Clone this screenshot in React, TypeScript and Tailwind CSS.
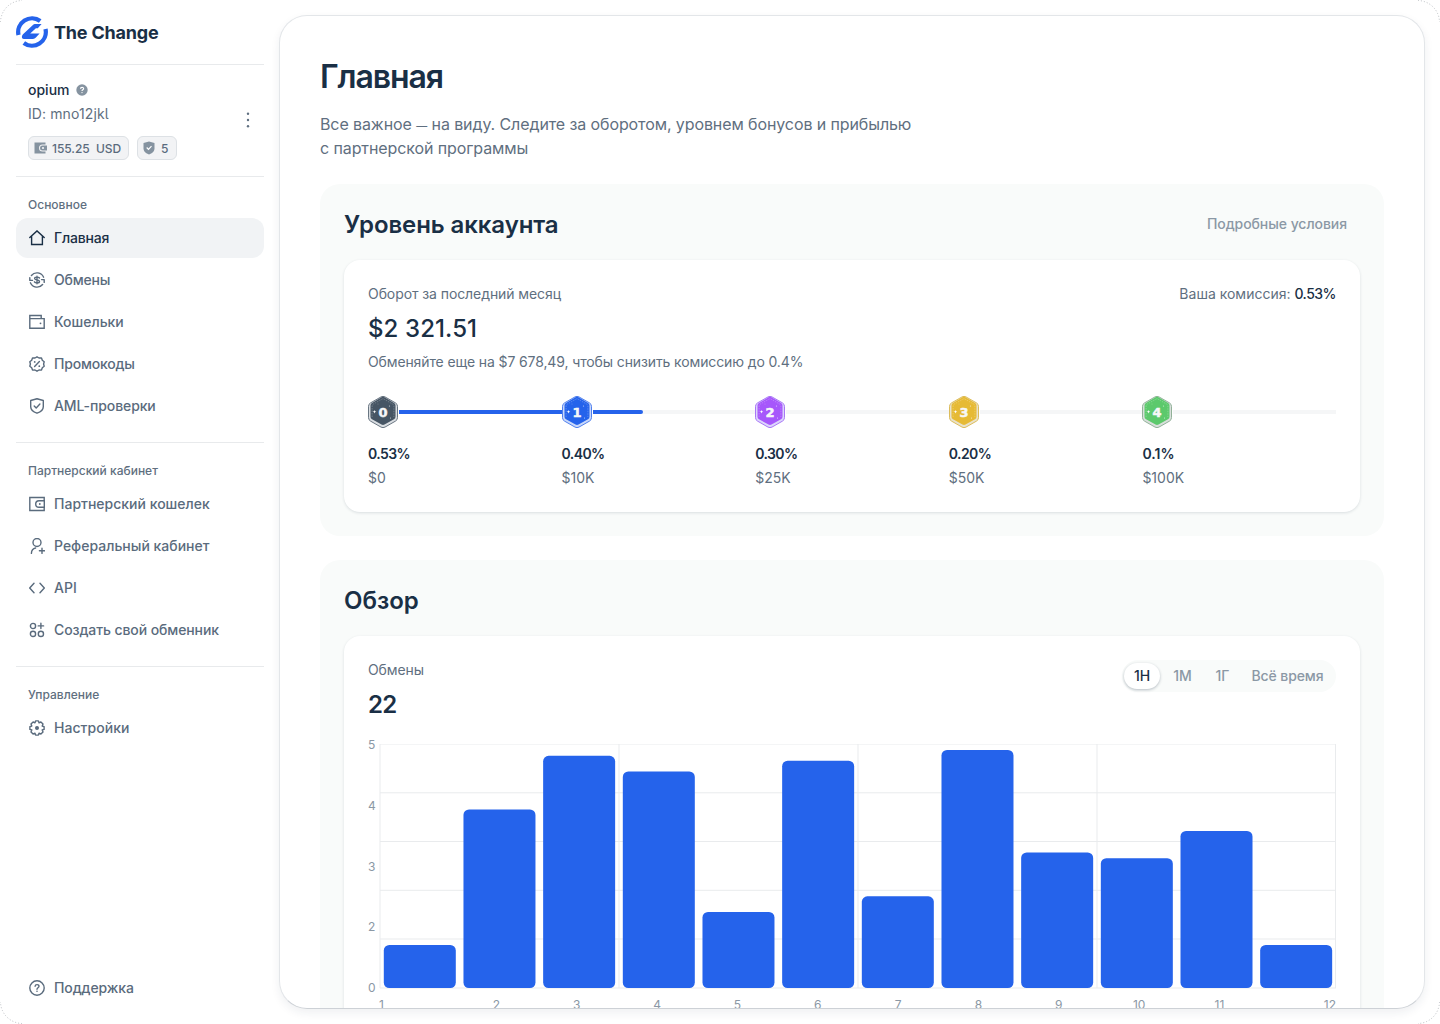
import type { ReactNode } from 'react';

type IconProps = { children: ReactNode; className?: string };

const Icon = ({ children, className = 'w-4 h-4' }: IconProps) => (
  <svg
    viewBox="0 0 16 16"
    className={`${className} shrink-0`}
    fill="none"
    stroke="currentColor"
    strokeWidth="1.4"
    strokeLinecap="round"
    strokeLinejoin="round"
  >
    {children}
  </svg>
);

const HomeIcon = () => (
  <Icon>
    <path d="M.8 7.6 8 .9l7.2 6.7M2.6 6.2v8.3h10.8V6.2" strokeLinejoin="miter" />
  </Icon>
);

const ExchangeIcon = () => (
  <Icon>
    <path d="M2.4 3.5A7.2 7.2 0 0 1 14.6 5.2M13.6 12.5A7.2 7.2 0 0 1 1.4 10.8" />
    <path d="M.8 5.600v2.800h2.700M15.200 10.400V7.600h-2.700" />
    <path d="M10.500 6C10 5.300 9.100 5.100 8 5.100c-1.400 0-2.400.5-2.400 1.500 0 2 4.900.8 4.900 2.800 0 1-1.200 1.500-2.500 1.500-1.200 0-2.200-.4-2.600-1.100M8 4.300v7.400" />
  </Icon>
);

const WalletIcon = () => (
  <Icon>
    <path d="M.8 4.600V1.500h11.400v3.100M.8 4.600h14.400v9.600H.8z" strokeLinejoin="miter" />
    <circle cx="11.500" cy="9.300" r=".9" fill="currentColor" stroke="none" />
  </Icon>
);

const PromoIcon = () => (
  <Icon>
    <path d="M8 .8 10 2l2.500-.1.8 2.300 1.900 1.500-.6 2.300.6 2.300-1.900 1.500-.8 2.300-2.500-.1-2 1.200-2-1.200-2.500.1-.8-2.300L.8 10.300 1.400 8 .8 5.700l1.900-1.500.8-2.300L6 2z" />
    <path d="M10.400 5.600 5.600 10.400" />
    <circle cx="5.700" cy="5.900" r=".9" fill="currentColor" stroke="none" />
    <circle cx="10.300" cy="10.200" r=".9" fill="currentColor" stroke="none" />
  </Icon>
);

const ShieldIcon = () => (
  <Icon>
    <path d="M8 .8 14.300 2.500v6.200c0 3.300-3 5.300-6.300 6.500-3.300-1.200-6.300-3.200-6.300-6.500V2.500z" />
    <path d="m5.200 7.900 2 2 3.700-3.800" />
  </Icon>
);

const PartnerWalletIcon = () => (
  <Icon>
    <path d="M15.200 4.300V1.500H.8v13h14.400v-2.800M15.300 4.700H10a3.300 3.300 0 0 0 0 6.600h5.300z" strokeLinejoin="miter" />
    <circle cx="10.800" cy="8" r=".9" fill="currentColor" stroke="none" />
  </Icon>
);

const ReferralIcon = () => (
  <Icon>
    <circle cx="8" cy="4.500" r="4" />
    <path d="M2.400 15.400c.1-3 1.700-5 4.200-5.400M13 10.200v5.200M10.400 12.800h5.200" />
  </Icon>
);

const CodeIcon = () => (
  <Icon>
    <path d="M5 3.200.7 8 5 12.800M11 3.200 15.300 8 11 12.800" />
  </Icon>
);

const AppsIcon = () => (
  <Icon>
    <circle cx="4" cy="4" r="2.600" />
    <circle cx="4" cy="11.900" r="2.600" />
    <circle cx="11.900" cy="11.900" r="2.600" />
    <path d="M11.900 1.200v5.400M9.200 3.900h5.400" />
  </Icon>
);

const SettingsIcon = () => (
  <Icon>
    <path d="M6.600.9h2.800l.6 1.900 1.900-.8L14 4.100l-.8 1.900 1.900.6v2.800l-1.900.6.8 1.900-2.100 2.100-1.900-.8-.6 1.900H6.600L6 13.200l-1.900.8L2 11.900l.8-1.900-1.900-.6V6.600L2.800 6 2 4.100 4.100 2l1.900.8z" />
    <circle cx="8" cy="8" r="1.300" fill="currentColor" />
  </Icon>
);

const HelpIcon = () => (
  <Icon>
    <circle cx="8" cy="8" r="7.200" />
    <path d="M6.100 6.300C6.200 5.200 6.900 4.600 8 4.600s2 .7 2 1.700c0 1.400-2 1.500-2 2.900" />
    <circle cx="8" cy="11.300" r=".8" fill="currentColor" stroke="none" />
  </Icon>
);

const LogoMark = () => (
  <svg viewBox="0 0 32 32" className="w-8 h-8 shrink-0" fill="none" stroke="#2563eb" strokeWidth="4.300">
    <path d="M2.500 19A13.800 13.800 0 0 1 24.200 5" />
    <path d="M29.500 13A13.800 13.800 0 0 1 7.800 27" />
    <path
      d="m7 18.200 9.400-8.800c1.100-1.100 2-1.500 3.400-1.500h5.800l-3.800 4.300h-1.900l-5.700 5.400h9.400l-3.700 4c-.9.900-1.700 1.300-2.900 1.300H7.800c-2.200 0-2.500-3-.8-4.700z"
      fill="#2563eb"
      stroke="none"
    />
  </svg>
);

const mainMenu = [
  { label: 'Главная', icon: <HomeIcon />, tracking: 'tracking-[-0.2px]' },
  { label: 'Обмены', icon: <ExchangeIcon />, tracking: 'tracking-[-0.2px]' },
  { label: 'Кошельки', icon: <WalletIcon />, tracking: 'tracking-normal' },
  { label: 'Промокоды', icon: <PromoIcon />, tracking: 'tracking-[-0.2px]' },
  { label: 'AML-проверки', icon: <ShieldIcon />, tracking: 'tracking-[-0.1px]' },
];

const partnerMenu = [
  { label: 'Партнерский кошелек', icon: <PartnerWalletIcon />, tracking: 'tracking-normal' },
  { label: 'Реферальный кабинет', icon: <ReferralIcon />, tracking: 'tracking-normal' },
  { label: 'API', icon: <CodeIcon />, tracking: 'tracking-[0.1px]' },
  { label: 'Создать свой обменник', icon: <AppsIcon />, tracking: 'tracking-[-0.1px]' },
];

type NavItemProps = { label: string; icon: ReactNode; tracking: string; active?: boolean };

const NavItem = ({ label, icon, tracking, active }: NavItemProps) => (
  <a
    className={`flex h-10 items-center gap-[9px] rounded-xl px-[13px] text-sm font-medium ${
      active ? 'bg-[#f1f3f5] text-[#1a2f45]' : 'text-[#5a6b7d]'
    }`}
  >
    {icon}
    <span className={`whitespace-nowrap ${tracking}`}>{label}</span>
  </a>
);

const MenuTitle = ({ children }: { children: ReactNode }) => (
  <div className="h-[41px] px-3 pt-5 text-xs leading-4 font-medium text-[#5f6f80]">{children}</div>
);

const Sidebar = () => (
  <aside className="flex h-full w-[279px] shrink-0 flex-col pt-4 pr-[15px] pb-4 pl-4">
    <div className="flex h-[49px] items-start gap-1.5 border-b border-[#e8eaec]">
      <LogoMark />
      <span className="text-lg leading-[33px] font-bold tracking-[-0.2px] text-[#1a2f45]">The Change</span>
    </div>

    <div className="flex h-28 justify-between border-b border-[#e8eaec] px-3 pt-[13px]">
      <div>
        <div className="flex h-6 items-center gap-1.5">
          <span className="text-sm font-medium text-[#1a2f45]">opium</span>
          <svg viewBox="0 0 12 12" className="h-3 w-3" fill="none">
            <circle cx="6" cy="6" r="5.700" fill="#8593a0" />
            <path d="M4.500 4.800c0-2 3.100-2 3.100-.1C7.600 5.900 6 5.700 6 7" stroke="#fff" strokeWidth="1.200" />
            <circle cx="6" cy="8.600" r=".7" fill="#fff" />
          </svg>
        </div>
        <div className="h-6 text-sm leading-6 tracking-[0.1px] text-[#5f6f80] [font-feature-settings:'cv05']">ID: mno12jkl</div>
        <div className="mt-2.5 flex gap-2">
          <div className="flex h-6 w-[101px] items-center gap-1 rounded-md border border-[#dde1e5] bg-[#f2f3f5] pl-[5px] text-xs font-medium whitespace-pre text-[#5a6b7d]">
            <svg viewBox="0 0 14 12" className="h-3 w-3.5 shrink-0" fill="none">
              <path d="M.5.5h11v2H8.500a3.500 3.500 0 0 0 0 7h3v2H.5z" fill="#8593a0" />
              <path d="M13 3.500H8.500a2.500 2.500 0 0 0 0 5H13z" fill="#8593a0" />
              <circle cx="9" cy="6" r="1.100" fill="#f2f3f5" />
            </svg>
            <span className="pt-px tracking-[-0.05px]">155.25  USD</span>
          </div>
          <div className="flex h-6 w-10 items-center gap-1.5 rounded-md border border-[#dde1e5] bg-[#f2f3f5] pl-[5px] text-xs font-medium text-[#5a6b7d]">
            <svg viewBox="0 0 12 14" className="h-3.5 w-3 shrink-0" fill="none">
              <path d="M6 .5 11.500 2v5.400c0 3-2.600 4.800-5.500 6.100C3.100 12.200.5 10.400.5 7.400V2z" fill="#8593a0" />
              <path d="m3.700 6.500 1.800 1.800 3-3.100" stroke="#fff" strokeWidth="1.200" />
            </svg>
            <span className="pt-px">5</span>
          </div>
        </div>
      </div>
      <svg viewBox="0 0 8 16" className="mt-[34px] h-4 w-2" fill="#5f6f80">
        <circle cx="4" cy="1.700" r="1.200" />
        <circle cx="4" cy="8" r="1.200" />
        <circle cx="4" cy="14.300" r="1.200" />
      </svg>
    </div>

    <nav className="flex flex-col">
      <div className="border-b border-[#e8eaec] pb-4">
        <MenuTitle>Основное</MenuTitle>
        <div className="flex flex-col gap-0.5">
          {mainMenu.map((item, index) => (
            <NavItem key={item.label} {...item} active={index === 0} />
          ))}
        </div>
      </div>
      <div className="border-b border-[#e8eaec] pb-4">
        <MenuTitle>Партнерский кабинет</MenuTitle>
        <div className="flex flex-col gap-0.5">
          {partnerMenu.map((item) => (
            <NavItem key={item.label} {...item} />
          ))}
        </div>
      </div>
      <MenuTitle>Управление</MenuTitle>
      <NavItem label="Настройки" icon={<SettingsIcon />} tracking="tracking-[0.05px]" />
    </nav>

    <div className="mt-auto">
      <NavItem label="Поддержка" icon={<HelpIcon />} tracking="tracking-[-0.1px]" />
    </div>
  </aside>
);

const levels = [
  { level: 0, fee: '0.53%', amount: '$0', fill: '#465564', ring: '#d9dde1', edge: '#5a6875', line: 'bg-[#2563eb]' },
  { level: 1, fee: '0.40%', amount: '$10K', fill: '#2563eb', ring: '#c9d8fa', edge: '#3f74ec', line: 'bg-[#f5f6f7]' },
  { level: 2, fee: '0.30%', amount: '$25K', fill: '#a657fb', ring: '#dcd5fc', edge: '#a06af5', line: 'bg-[#f5f6f7]' },
  { level: 3, fee: '0.20%', amount: '$50K', fill: '#e6ba35', ring: '#e9e2cc', edge: '#d9b549', line: 'bg-[#f5f6f7]' },
  { level: 4, fee: '0.1%', amount: '$100K', fill: '#5cc96c', ring: '#d9dfdc', edge: '#87a98e', line: 'bg-[#f5f6f7]' },
];

type BadgeProps = { level: number; fill: string; ring: string; edge: string };

const LevelBadge = ({ level, fill, ring, edge }: BadgeProps) => (
  <svg viewBox="0 0 30 32" className="h-8 w-[30px] shrink-0">
    <path
      d="M13 .9a4 4 0 0 1 4 0l10.500 6a4 4 0 0 1 2 3.500v11.200a4 4 0 0 1-2 3.500L17 31.100a4 4 0 0 1-4 0l-10.500-6a4 4 0 0 1-2-3.500V10.400a4 4 0 0 1 2-3.500z"
      fill={ring}
      stroke={edge}
      strokeWidth=".9"
    />
    <path
      d="M13.500 1.300a3 3 0 0 1 3 0l9.500 5.600a3 3 0 0 1 1.500 2.600v11.200a3 3 0 0 1-1.500 2.600l-9.500 5.200a3 3 0 0 1-3 0L4 23.300a3 3 0 0 1-1.500-2.600V9.500A3 3 0 0 1 4 6.900z"
      fill={fill}
    />
    <path d="M4.100 21V10.200q0-1.500 1.300-2.200L15 2.600 24.600 8q1.300.7 1.300 2.200V21" fill="none" stroke="#fff" strokeOpacity=".4" strokeWidth=".6" strokeDasharray="1.500 1" />
    <path d="m6.500 14 .5 1.300 1.300.5-1.300.5-.5 1.300-.5-1.300-1.300-.5 1.300-.5z" fill="#fff" />
    <circle cx="21.500" cy="10" r=".6" fill="#fff" opacity=".7" />
    <circle cx="22.500" cy="22" r=".5" fill="#fff" opacity=".8" />
    <circle cx="10" cy="8" r=".4" fill="#fff" opacity=".5" />
    <text
      x="15"
      y="20.600"
      textAnchor="middle"
      fontSize="13"
      fontWeight="bold"
      fill="#f6f7f8"
      stroke="#f6f7f8"
      strokeWidth=".5"
      className="font-['DejaVu_Sans',sans-serif]"
    >
      {level}
    </text>
  </svg>
);

const AccountLevel = () => (
  <section className="rounded-[20px] bg-[#f9fbfa] p-6">
    <div className="flex h-[34px] items-center justify-between pr-[13px]">
      <h2 className="text-2xl font-semibold tracking-[-0.1px] text-[#1a2f45]">Уровень аккаунта</h2>
      <button className="pb-0.5 text-sm font-medium tracking-[-0.06px] text-[#8b98a5]">Подробные условия</button>
    </div>
    <div className="mt-[18px] h-[252px] rounded-2xl bg-white p-6 shadow-[0_1px_3px_rgba(26,47,69,0.14)]">
      <div className="flex h-5 items-center justify-between text-sm text-[#5f6f80]">
        <span className="tracking-[-0.08px]">Оборот за последний месяц</span>
        <span>
          Ваша комиссия: <span className="font-medium tracking-[-0.5px] text-[#1a2f45]">0.53%</span>
        </span>
      </div>
      <div className="mt-[9px] text-2xl leading-8 font-medium tracking-[0.1px] text-[#1a2f45]">$2 321.51</div>
      <div className="mt-[7px] text-sm leading-5 tracking-[-0.12px] text-[#5f6f80]">
        Обменяйте еще на $7 678,49, чтобы снизить комиссию до 0.4%
      </div>
      <div className="mt-6 grid grid-cols-5">
        {levels.map(({ level, fee, amount, fill, ring, edge, line }) => (
          <div key={level}>
            <div className="flex h-8 items-center gap-px">
              <LevelBadge level={level} fill={fill} ring={ring} edge={edge} />
              <div className={`flex h-1 grow ${line}`}>
                {level === 1 && <div className="w-[50px] rounded-r-full bg-[#2563eb]" />}
              </div>
            </div>
            <div
              className={`mt-[14px] text-sm leading-6 font-semibold text-[#1a2f45] ${
                level === 4 ? 'tracking-normal' : 'tracking-[-0.6px]'
              }`}
            >
              {fee}
            </div>
            <div className="text-sm leading-6 text-[#5f6f80]">{amount}</div>
          </div>
        ))}
      </div>
    </div>
  </section>
);

// Bar heights in chart pixels, the plot area is 244px high
const bars = [43, 178.5, 232.2, 216.6, 76, 227.3, 91.7, 238, 135.5, 129.8, 157, 43];

const Chart = () => (
  <div className="mt-6">
    <div className="flex">
      <div className="-mt-[7px] flex h-[259px] w-[11px] flex-col justify-between text-xs leading-4 text-[#8b98a5]">
        {['5', '4', '3', '2', '0'].map((label) => (
          <span key={label}>{label}</span>
        ))}
      </div>
      <svg viewBox="-1.500 .5 958 246" className="h-[246px] w-[958px] shrink-0">
        <g stroke="#e9ebed" strokeWidth="1">
          {[0.5, 49.3, 98, 146.8, 195.5, 244.5].map((y) => (
            <path key={y} d={`M.5 ${y}h956`} />
          ))}
          {[0.5, 239.5, 478.5, 717.5, 956].map((x) => (
            <path key={x} d={`M${x} .5v244`} />
          ))}
        </g>
        {bars.map((height, index) => (
          <rect key={index} x={4.3 + index * 79.67} y={244.5 - height} width="72" height={height} rx="5.5" fill="#2563eb" />
        ))}
      </svg>
    </div>
    <div className="mt-px -mr-1 ml-2 grid grid-cols-12 text-xs leading-4 text-[#8b98a5]">
      {bars.map((_, index) => (
        <span key={index} className="text-center first:pl-[3px] first:text-left last:pr-1 last:text-right">
          {index + 1}
        </span>
      ))}
    </div>
  </div>
);

const Overview = () => (
  <section className="mt-6 rounded-t-[20px] bg-[#f9fbfa] p-6">
    <h2 className="text-2xl leading-[34px] font-semibold text-[#1a2f45]">Обзор</h2>
    <div className="mt-[18px] h-[480px] rounded-2xl bg-white p-6 shadow-[0_1px_3px_rgba(26,47,69,0.14)]">
      <div className="flex h-[60px] items-start justify-between">
        <div>
          <div className="text-sm leading-5 tracking-[-0.1px] text-[#5f6f80]">Обмены</div>
          <div className="mt-[9px] text-2xl leading-8 font-semibold tracking-[-0.7px] text-[#1a2f45]">22</div>
        </div>
        <div className="flex h-8 items-center rounded-full bg-[#f9fbfa] p-0.5 text-sm font-medium text-[#8b98a5]">
          <span className="flex h-[26px] w-9 items-center justify-center rounded-full bg-white text-[#1a2f45] shadow-[0_1px_3px_rgba(26,47,69,0.3)]">
            1Н
          </span>
          <span className="w-[45px] text-center">1М</span>
          <span className="w-[35px] text-center">1Г</span>
          <span className="w-[94px] pl-px text-center tracking-[-0.1px] whitespace-nowrap">Всё время</span>
        </div>
      </div>
      <Chart />
    </div>
  </section>
);

// Dotted outline in the window corners
const WindowCorner = ({ className }: { className: string }) => (
  <svg viewBox="0 0 24 24" className={`pointer-events-none absolute h-6 w-6 ${className}`} fill="none">
    <path d="M.5 22A22 22 0 0 1 22 .5" stroke="#b9bdc1" strokeDasharray="1 2" />
  </svg>
);

const App = () => (
  <div className="relative flex h-[1024px] w-[1440px] overflow-hidden bg-white font-[Inter,'Noto_Sans',sans-serif]">
    <WindowCorner className="top-0 left-0" />
    <WindowCorner className="top-0 right-0 rotate-90" />
    <WindowCorner className="right-0 bottom-0 rotate-180" />
    <WindowCorner className="bottom-0 left-0 -rotate-90" />
    <Sidebar />
    <main className="mt-[15px] h-[994px] w-[1146px] shrink-0 overflow-hidden rounded-[28px] border border-[#e3e6e9] border-b-[#cdd1d6] bg-white px-10 pt-10 shadow-[0_4px_10px_rgba(26,47,69,0.07)]">
      <h1 className="text-[32px] leading-[42px] font-semibold tracking-[-1.1px] text-[#1a2f45]">Главная</h1>
      <p className="mt-[14px] mb-6 text-base leading-6 tracking-[-0.1px] text-[#5f6f80]">
        Все важное <span className="text-[11px] leading-none">—</span> на виду. Следите за оборотом, уровнем бонусов и прибылью
        <br />с партнерской программы
      </p>
      <AccountLevel />
      <Overview />
    </main>
  </div>
);

export default App;
